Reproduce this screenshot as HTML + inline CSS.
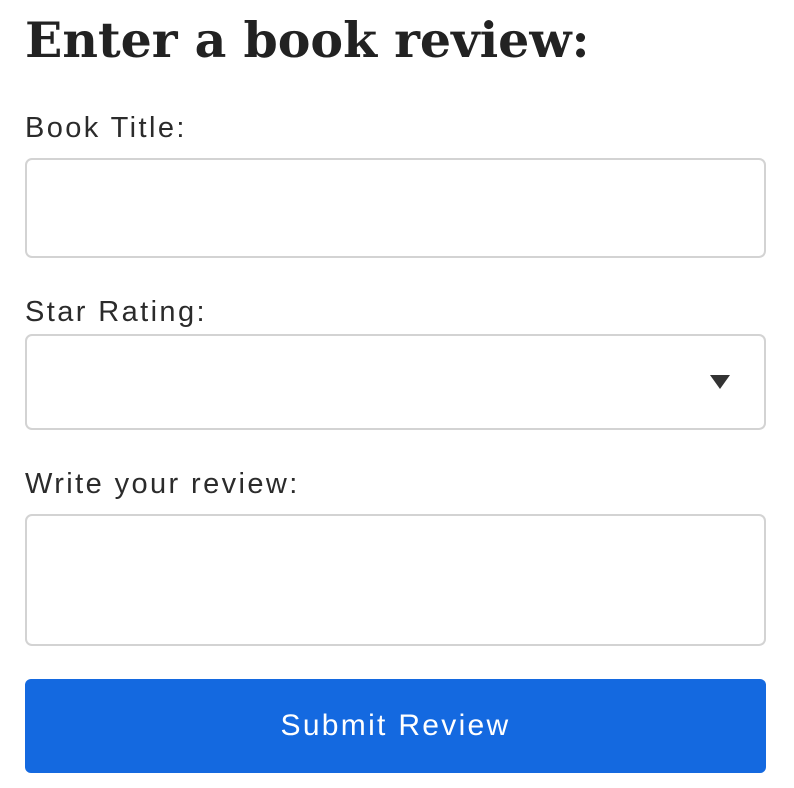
<!DOCTYPE html>
<html><head><style>
body{margin:0;background:#fff;width:794px;height:788px;position:relative;font-family:"Liberation Sans",sans-serif;color:#2b2b2b;overflow:hidden}
h1{position:absolute;left:25px;top:7px;margin:0;font-family:"DejaVu Serif","Liberation Serif",serif;font-weight:bold;font-size:49px;line-height:66px;color:#222;white-space:nowrap;letter-spacing:0}
.l{position:absolute;left:25px;font-size:29px;line-height:34px;white-space:nowrap;color:#2b2b2b;letter-spacing:2.4px}
.b{position:absolute;left:25px;width:737px;border:2px solid #d3d3d3;border-radius:7px;background:#fff}
.tri{position:absolute;left:710px;top:375px;width:0;height:0;border-left:10px solid transparent;border-right:10px solid transparent;border-top:14px solid #333}
.btn{position:absolute;left:25px;top:679px;width:741px;height:94px;background:#1469e0;border-radius:6px;color:#fff;font-size:30px;line-height:94px;text-align:center;letter-spacing:2.3px}
</style></head><body>
<h1>Enter a book review:</h1>
<div class="l" style="top:111px">Book Title:</div>
<div class="b" style="top:158px;height:96px"></div>
<div class="l" style="top:295px">Star Rating:</div>
<div class="b" style="top:334px;height:92px"></div>
<div class="tri"></div>
<div class="l" style="top:467px">Write your review:</div>
<div class="b" style="top:514px;height:128px"></div>
<div class="btn">Submit Review</div>
</body></html>
